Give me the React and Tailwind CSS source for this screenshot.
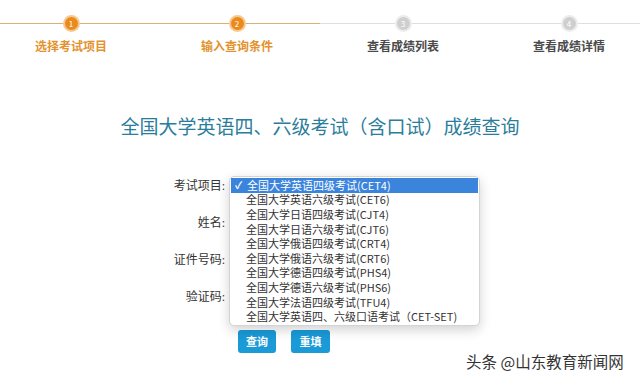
const steps = [
  { n: 1, label: "选择考试项目", done: true },
  { n: 2, label: "输入查询条件", done: true },
  { n: 3, label: "查看成绩列表", done: false },
  { n: 4, label: "查看成绩详情", done: false },
];

const options = [
  "全国大学英语四级考试(CET4)",
  "全国大学英语六级考试(CET6)",
  "全国大学日语四级考试(CJT4)",
  "全国大学日语六级考试(CJT6)",
  "全国大学俄语四级考试(CRT4)",
  "全国大学俄语六级考试(CRT6)",
  "全国大学德语四级考试(PHS4)",
  "全国大学德语六级考试(PHS6)",
  "全国大学法语四级考试(TFU4)",
  "全国大学英语四、六级口语考试（CET-SET)",
];

const fields = ["考试项目:", "姓名:", "证件号码:", "验证码:"];

const serif = { fontFamily: '"Liberation Serif", "Noto Sans CJK SC", serif' };

export default function App() {
  return (
    <div
      className="relative h-[386px] w-[640px] overflow-hidden bg-white"
      style={{ fontFamily: '"Noto Sans CJK SC", sans-serif' }}
    >
      {/* stepper */}
      <div className="relative h-[60px]">
        <div className="absolute inset-x-0 top-[23px] flex h-px">
          <div className="w-1/2 bg-[#d9b07a]" />
          <div className="w-1/2 bg-[#dedede]" />
        </div>
        <div className="relative flex gap-[56px] pl-[16px] pt-[17px]">
          {steps.map((s) => (
            <div key={s.n} className="flex w-[110px] flex-col items-center">
              <div
                className={`grid h-[13px] w-[13px] place-items-center rounded-full text-[8px] leading-none text-white ${
                  s.done
                    ? "bg-[#ea8a1c] ring-2 ring-[#f6c98e]"
                    : "bg-[#cfcfcf] ring-2 ring-[#ececec]"
                }`}
              >
                {s.n}
              </div>
              <div
                className={`mt-[10px] text-[12px] font-bold leading-[14px] ${
                  s.done ? "text-[#e3922e]" : "text-[#4a4a4a]"
                }`}
                style={serif}
              >
                {s.label}
              </div>
            </div>
          ))}
        </div>
      </div>

      {/* title */}
      <h1 className="mt-[53px] text-center text-[19px] leading-[26px] text-[#2b7d9c]">
        全国大学英语四、六级考试（含口试）成绩查询
      </h1>

      {/* form */}
      <div className="relative ml-[125px] mt-[28px]">
        <div className="flex flex-col">
          {fields.map((f) => (
            <div key={f} className="flex h-[37px] items-center">
              <span
                className="w-[100px] text-right text-[12px] text-[#333]"
                style={serif}
              >
                {f}
              </span>
            </div>
          ))}
        </div>

        <div className="mt-[15px] flex gap-[15px] pl-[113px]">
          <button className="h-[23px] w-[38px] rounded-[3px] bg-[#1a9ad7] text-[11px] font-bold text-white">
            查询
          </button>
          <button className="h-[23px] w-[39px] rounded-[3px] bg-[#1a9ad7] text-[11px] font-bold text-white">
            重填
          </button>
        </div>

        {/* open select menu */}
        <div className="absolute left-[104px] top-[9px] w-[251px] rounded-[5px] border border-[#d4d4d4] bg-white py-[1px] shadow-[0_4px_12px_rgba(0,0,0,0.18)]">
          {options.map((o, i) => (
            <div
              key={o}
              className={`flex h-[14.6px] items-center text-[11px] leading-none ${
                i === 0 ? "mx-[1px] bg-[#3a84dc] text-white" : "text-[#333]"
              }`}
            >
              <span className="w-[16px] pl-[4px] text-[10px] font-bold">{i === 0 ? "✓" : ""}</span>
              <span>{o}</span>
            </div>
          ))}
        </div>
      </div>

      {/* watermark */}
      <div className="absolute left-[466px] top-[350px] text-[15.5px] leading-[22px] text-[#333]">
        头条 @山东教育新闻网
      </div>
    </div>
  );
}
